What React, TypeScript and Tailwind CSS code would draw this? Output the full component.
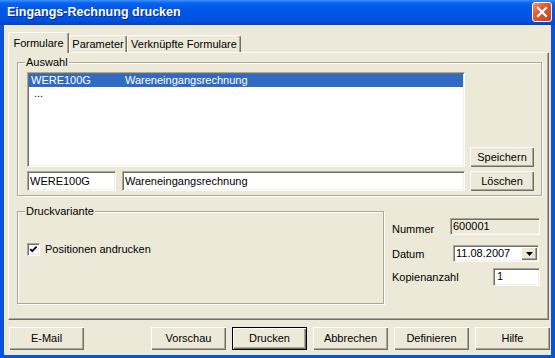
import React from "react";

const sunken =
  "border border-t-[#aca899] border-l-[#aca899] border-r-white border-b-white shadow-[inset_1px_1px_0_#716f64,inset_-1px_-1px_0_#f1efe2]";
const raised =
  "shadow-[inset_1px_1px_0_#ffffff,inset_-1px_-1px_0_#716f64,inset_-2px_-2px_0_#aca899]";

function Btn({
  children,
  className = "",
  def = false,
}: {
  children: React.ReactNode;
  className?: string;
  def?: boolean;
}) {
  return (
    <div
      className={`flex items-center justify-center bg-[#ece9d8] leading-[13px] ${raised} ${
        def ? "border border-black" : ""
      } ${className}`}
    >
      {children}
    </div>
  );
}

function Group({
  label,
  className = "",
  children,
}: {
  label: string;
  className?: string;
  children?: React.ReactNode;
}) {
  return (
    <div
      className={`relative border border-[#aca899] shadow-[inset_1px_1px_0_#ffffff,1px_1px_0_#ffffff] ${className}`}
    >
      <span className="absolute -top-[7px] left-[7px] px-[1px] bg-[#ece9d8] leading-[13px]">
        {label}
      </span>
      {children}
    </div>
  );
}

export default function App() {
  return (
    <div className="w-[555px] h-[358px] flex flex-col bg-[#0853de] font-['Liberation_Sans',Arial,sans-serif] text-[11px] text-black overflow-hidden">
      {/* Title bar */}
      <div className="h-[25px] shrink-0 flex items-start justify-between pl-[7px] pr-[3px] bg-[linear-gradient(180deg,#3a93fb_0%,#0b64ee_12%,#0058e8_35%,#0055e3_65%,#004fdb_85%,#0143c8_100%)]">
        <div className="mt-[5px] text-[12.5px] font-bold text-white leading-[15px] [text-shadow:1px_1px_0_#0a2a90]">
          Eingangs-Rechnung drucken
        </div>
        <div className="mt-[2px] w-[20px] h-[20px] rounded-[3px] border border-white bg-[linear-gradient(135deg,#f0937a_0%,#e05a39_40%,#c8401f_100%)] flex items-center justify-center">
          <svg width="12" height="12" viewBox="0 0 12 12">
            <path
              d="M2 2 L10 10 M10 2 L2 10"
              stroke="white"
              strokeWidth="2.2"
              strokeLinecap="square"
            />
          </svg>
        </div>
      </div>

      {/* Body */}
      <div className="flex-1 mx-[4px] mb-[3px] bg-[#ece9d8] flex flex-col">
        {/* Tabs */}
        <div className="h-[27px] shrink-0 flex items-end pl-[4px]">
          <div className="relative z-10 -mb-[1px] h-[21px] w-[61px] flex items-center justify-center border-l border-t border-r border-l-white border-t-white border-r-[#716f64] rounded-t-[3px] bg-[#ece9d8] shadow-[inset_-1px_0_0_#aca899]">
            Formulare
          </div>
          <div className="h-[17px] w-[58px] flex items-center justify-center border-l border-t border-r border-l-white border-t-white border-r-[#716f64] rounded-t-[3px] shadow-[inset_-1px_0_0_#aca899]">
            Parameter
          </div>
          <div className="h-[17px] w-[114px] flex items-center justify-center border-l border-t border-r border-l-white border-t-white border-r-[#716f64] rounded-t-[3px] shadow-[inset_-1px_0_0_#aca899]">
            Verknüpfte Formulare
          </div>
        </div>

        {/* Tab panel */}
        <div className="ml-[4px] w-[541px] h-[268px] shrink-0 border border-t-white border-l-white border-r-[#716f64] border-b-[#716f64] shadow-[inset_-1px_-1px_0_#aca899] flex flex-col">
          <Group
            label="Auswahl"
            className="ml-[8px] mt-[9px] w-[525px] h-[134px] pl-[9px] pt-[9px] flex flex-col"
          >
            <div className="flex items-end">
              <div
                className={`w-[438px] h-[95px] bg-white p-[1px] ${sunken}`}
              >
                <div className="h-[13px] leading-[13px] flex bg-[#316ac5] text-white">
                  <span className="w-[96px] pl-[2px]">WERE100G</span>
                  <span>Wareneingangsrechnung</span>
                </div>
                <div className="h-[13px] leading-[13px] pl-[5px]">...</div>
              </div>
              <Btn className="ml-[5px] w-[64px] h-[20px]">Speichern</Btn>
            </div>
            <div className="flex mt-[4px]">
              <div
                className={`w-[89px] h-[20px] bg-white pl-[2px] flex items-center leading-[13px] ${sunken}`}
              >
                WERE100G
              </div>
              <div
                className={`ml-[6px] w-[343px] h-[20px] bg-white pl-[2px] flex items-center leading-[13px] ${sunken}`}
              >
                Wareneingangsrechnung
              </div>
              <Btn className="ml-[5px] w-[64px] h-[20px]">Löschen</Btn>
            </div>
          </Group>

          <div className="flex mt-[15px]">
            <Group
              label="Druckvariante"
              className="ml-[8px] w-[367px] h-[93px] pl-[9px] pt-[31px]"
            >
              <div className="flex items-center gap-[5px]">
                <div
                  className={`w-[13px] h-[13px] bg-white flex items-center justify-center ${sunken}`}
                >
                  <svg width="11" height="11" viewBox="0 0 11 11">
                    <path
                      d="M2.2 5 L4.2 7.2 L8.6 2.6"
                      stroke="black"
                      strokeWidth="1.8"
                      fill="none"
                    />
                  </svg>
                </div>
                <span className="leading-[13px]">Positionen andrucken</span>
              </div>
            </Group>

            <div className="ml-[8px] pt-[7px] w-[148px] flex flex-col">
              <div className="h-[17px] flex items-start justify-between">
                <span className="pt-[5px] leading-[13px]">Nummer</span>
                <div
                  className={`w-[90px] h-[17px] pl-[2px] flex items-center leading-[13px] bg-[#ece9d8] ${sunken}`}
                >
                  600001
                </div>
              </div>
              <div className="mt-[10px] h-[17px] flex items-start justify-between">
                <span className="pt-[3px] leading-[13px]">Datum</span>
                <div
                  className={`mr-[1px] w-[86px] h-[17px] p-[1px] bg-white flex items-center justify-between ${sunken}`}
                >
                  <span className="pl-[1px] leading-[13px]">11.08.2007</span>
                  <div
                    className={`w-[16px] h-full bg-[#ece9d8] flex items-center justify-center ${raised}`}
                  >
                    <svg width="7" height="4" viewBox="0 0 7 4">
                      <path d="M0 0 H7 L3.5 4 Z" fill="black" />
                    </svg>
                  </div>
                </div>
              </div>
              <div className="mt-[6px] h-[18px] flex items-start justify-between">
                <span className="pt-[3px] leading-[13px]">Kopienanzahl</span>
                <div
                  className={`w-[47px] h-[18px] pl-[3px] pt-[1px] leading-[13px] bg-white ${sunken}`}
                >
                  1
                </div>
              </div>
            </div>
          </div>
        </div>

        {/* Bottom buttons */}
        <div className="mt-[7px] h-[23px] flex">
          <Btn className="ml-[5px] w-[75px] h-[23px]">E-Mail</Btn>
          <div className="flex-1" />
          <div className="flex gap-[6px] mr-[1px]">
            <Btn className="w-[75px] h-[23px]">Vorschau</Btn>
            <Btn def className="w-[75px] h-[23px]">
              Drucken
            </Btn>
            <Btn className="w-[75px] h-[23px]">Abbrechen</Btn>
            <Btn className="w-[75px] h-[23px]">Definieren</Btn>
            <Btn className="w-[75px] h-[23px]">Hilfe</Btn>
          </div>
        </div>
      </div>
    </div>
  );
}
